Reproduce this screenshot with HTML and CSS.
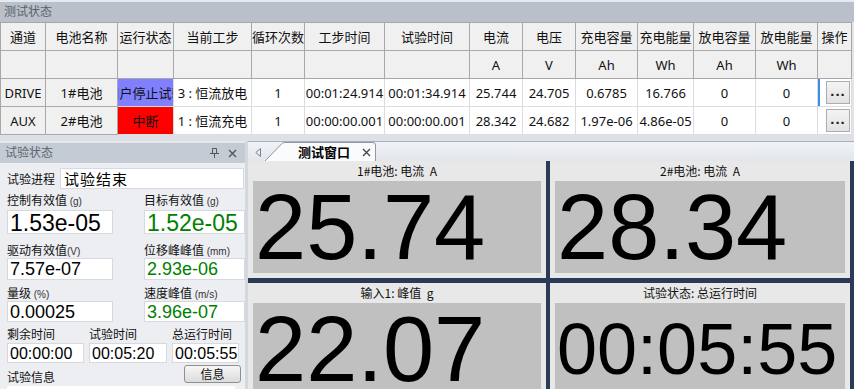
FILE: index.html
```html
<!DOCTYPE html>
<html lang="zh-CN">
<head>
    <meta charset="UTF-8">
    <title>测试状态</title>
    <link rel="stylesheet" href="styles.css">
</head>
<body>
    <div class="app">
        <div class="status-pane">
            <div class="pane-title">测试状态</div>
            <div class="grid-wrap">
                <table class="grid">
                    <colgroup>
                        <col style="width:45px"><col style="width:72px"><col style="width:56px"><col style="width:78px">
                        <col style="width:53px"><col style="width:80px"><col style="width:85px"><col style="width:53px">
                        <col style="width:53px"><col style="width:62px"><col style="width:56px"><col style="width:62px">
                        <col style="width:62px"><col style="width:34px">
                    </colgroup>
                    <thead>
                        <tr>
                            <th>通道</th><th>电池名称</th><th>运行状态</th><th>当前工步</th><th>循环次数</th>
                            <th>工步时间</th><th>试验时间</th><th>电流</th><th>电压</th><th>充电容量</th>
                            <th>充电能量</th><th>放电容量</th><th>放电能量</th><th>操作</th>
                        </tr>
                        <tr>
                            <th></th><th></th><th></th><th></th><th></th><th></th><th></th>
                            <th>A</th><th>V</th><th>Ah</th><th>Wh</th><th>Ah</th><th>Wh</th><th></th>
                        </tr>
                    </thead>
                    <tbody>
                        <tr>
                            <td class="head-cell">DRIVE</td>
                            <td class="head-cell">1#电池</td>
                            <td class="state state-stop"><div class="clip">用户停止试验</div></td>
                            <td><div class="clip">3 : 恒流放电</div></td>
                            <td>1</td>
                            <td><div class="clip">00:01:24.914</div></td>
                            <td><div class="clip">00:01:34.914</div></td>
                            <td>25.744</td><td>24.705</td><td>0.6785</td><td>16.766</td><td>0</td><td>0</td>
                            <td class="op focus"><button class="dots">...</button></td>
                        </tr>
                        <tr>
                            <td class="head-cell">AUX</td>
                            <td class="head-cell">2#电池</td>
                            <td class="state state-break"><div class="clip">中断</div></td>
                            <td><div class="clip">1 : 恒流充电</div></td>
                            <td>1</td>
                            <td><div class="clip">00:00:00.001</div></td>
                            <td><div class="clip">00:00:00.001</div></td>
                            <td>28.342</td><td>24.682</td><td><div class="clip">1.97e-06</div></td><td><div class="clip">4.86e-05</div></td><td>0</td><td>0</td>
                            <td class="op"><button class="dots">...</button></td>
                        </tr>
                    </tbody>
                </table>
            </div>
        </div>

        <div class="lower">
            <div class="dock">
                <div class="dock-title">
                    <span>试验状态</span>
                    <span class="dock-btns">
                        <svg width="9" height="10" viewBox="0 0 9 10">
                            <path d="M2.5 0.5h4v5h-4z M0 5.5h9 M4.5 5.5v4.5" fill="none" stroke="#555" stroke-width="1"/>
                        </svg>
                        <svg width="9" height="9" viewBox="0 0 9 9">
                            <path d="M1 1L8 8M8 1L1 8" stroke="#555" stroke-width="1.4"/>
                        </svg>
                    </span>
                </div>
                <div class="dock-body">
                    <div class="progress-row">
                        <span class="lbl">试验进程</span>
                        <div class="field field-progress">试验结束</div>
                    </div>

                    <div class="pair lbl-row mt4">
                        <span class="lbl">控制有效值 <small>(g)</small></span>
                        <span class="lbl">目标有效值 <small>(g)</small></span>
                    </div>
                    <div class="pair mt2">
                        <div class="field val-big">1.53e-05</div>
                        <div class="field val-big green">1.52e-05</div>
                    </div>

                    <div class="pair lbl-row mt8">
                        <span class="lbl">驱动有效值<small>(V)</small></span>
                        <span class="lbl">位移峰峰值 <small>(mm)</small></span>
                    </div>
                    <div class="pair">
                        <div class="field val h22">7.57e-07</div>
                        <div class="field val h22 green">2.93e-06</div>
                    </div>

                    <div class="pair lbl-row mt5">
                        <span class="lbl">量级 <small>(%)</small></span>
                        <span class="lbl">速度峰值 <small>(m/s)</small></span>
                    </div>
                    <div class="pair">
                        <div class="field val h21">0.00025</div>
                        <div class="field val h21 green">3.96e-07</div>
                    </div>

                    <div class="times lbl-row mt4">
                        <span class="lbl">剩余时间</span>
                        <span class="lbl">试验时间</span>
                        <span class="lbl">总运行时间</span>
                    </div>
                    <div class="times mt1">
                        <div class="field time">00:00:00</div>
                        <div class="field time">00:05:20</div>
                        <div class="field time">00:05:55</div>
                    </div>

                    <div class="info-row">
                        <span class="lbl">试验信息</span>
                        <button class="info-btn">信息</button>
                    </div>
                    <div class="info-box">
                        <div class="info-scroll"></div>
                    </div>
                </div>
            </div>

            <div class="splitter"></div>

            <div class="doc">
                <div class="tabstrip">
                    <svg class="tab-arrow" width="6" height="9" viewBox="0 0 6 9">
                        <path d="M5.5 0.5L0.8 4.5L5.5 8.5Z" fill="none" stroke="#7a8494" stroke-width="1"/>
                    </svg>
                    <div class="tab">
                        <svg class="tab-shape" width="112" height="19" viewBox="0 0 112 19">
                            <path d="M0 19L17 1.5Q18 0.5 20 0.5L108 0.5Q110.5 0.5 110.5 3L110.5 19" fill="#fafbfc" stroke="#8d97a6" stroke-width="1"/>
                        </svg>
                        <span class="tab-text">测试窗口</span>
                        <svg class="tab-close" width="9" height="9" viewBox="0 0 9 9">
                            <path d="M1 1L8 8M8 1L1 8" stroke="#444" stroke-width="1.3"/>
                        </svg>
                    </div>
                </div>
                <div class="tiles">
                    <div class="tile">
                        <div class="tile-title">1#电池: 电流&nbsp; A</div>
                        <div class="tile-value">25.74</div>
                    </div>
                    <div class="tile">
                        <div class="tile-title">2#电池: 电流&nbsp; A</div>
                        <div class="tile-value">28.34</div>
                    </div>
                    <div class="tile">
                        <div class="tile-title">输入1: 峰值&nbsp; g</div>
                        <div class="tile-value">22.07</div>
                    </div>
                    <div class="tile">
                        <div class="tile-title">试验状态: 总运行时间</div>
                        <div class="tile-value tile-time">00:05:55</div>
                    </div>
                </div>
            </div>
        </div>
    </div>
</body>
</html>
```

FILE: styles.css
```css
body {
    margin: 0;
    font-family: "Noto Sans", "Noto Sans CJK SC", sans-serif;
    background-color: #dde1e7;
    overflow: hidden;
}
.app {
    width: 854px;
    height: 389px;
    display: flex;
    flex-direction: column;
    overflow: hidden;
}

/* top grid pane */
.pane-title {
    height: 20px;
    border-top: 2px solid #e6e9ee;
    background-color: #b9c0ca;
    color: #5a606b;
    font-size: 12px;
    line-height: 20px;
    padding-left: 4px;
}
.grid-wrap {
    background-color: #e4e4e4;
    height: 113px;
}
.grid {
    border-collapse: collapse;
    table-layout: fixed;
    width: 851px;
    font-size: 13px;
    color: #111;
}
.grid tr {
    height: 28px;
}
.grid th {
    background-color: #f0f0f0;
    border: 1px solid #a8a8a8;
    font-weight: normal;
    padding: 0;
    white-space: nowrap;
    overflow: hidden;
}
.grid td {
    background-color: #fff;
    border: 1px solid #dcdcdc;
    text-align: center;
    padding: 0;
    white-space: nowrap;
    overflow: hidden;
}
.grid td.head-cell {
    background-color: #f0f0f0;
    border: 1px solid #a8a8a8;
}
.clip {
    display: flex;
    justify-content: center;
    overflow: hidden;
    white-space: nowrap;
}
.grid td.state-stop {
    background-color: #8080ff;
}
.grid td.state-break {
    background-color: #ff0000;
}
.grid td.op {
    text-align: right;
    padding-right: 1px;
}
.grid td.focus {
    box-shadow: inset 2px 0 0 #3a8ee6;
}
.dots {
    width: 24px;
    height: 23px;
    padding: 0 0 6px 0;
    border: 1px solid #adadad;
    background: linear-gradient(#f4f4f4, #e2e2e2);
    font-family: "Liberation Sans", sans-serif;
    font-size: 15px;
    font-weight: bold;
    letter-spacing: 1px;
    color: #222;
    vertical-align: middle;
}

/* lower area */
.lower {
    flex: 1;
    display: flex;
    margin-top: 6px;
    min-height: 0;
}
.dock {
    width: 245px;
    display: flex;
    flex-direction: column;
    background-color: #eceef2;
}
.dock-title {
    height: 20px;
    border-top: 2px solid #e4e7ec;
    background-color: #c5cbd4;
    color: #5f6570;
    font-size: 12px;
    line-height: 20px;
    padding-left: 5px;
    display: flex;
    justify-content: space-between;
    align-items: center;
}
.dock-btns {
    display: flex;
    align-items: center;
    gap: 9px;
    padding-right: 8px;
}
.dock-body {
    flex: 1;
    padding: 5px 0 0 7px;
    font-family: "Noto Sans CJK SC", sans-serif;
    display: flex;
    flex-direction: column;
    overflow: hidden;
}
.lbl {
    font-size: 12px;
    color: #111;
    white-space: nowrap;
}
.lbl small {
    font-family: "Liberation Sans", sans-serif;
    font-size: 10px;
    color: #333;
}
.progress-row {
    display: flex;
    align-items: center;
    height: 20px;
}
.progress-row .lbl {
    width: 53px;
}
.field {
    background-color: #fff;
    border: 1px solid #d6dae0;
    box-sizing: border-box;
    overflow: hidden;
    white-space: nowrap;
    color: #000;
}
.field-progress {
    width: 184px;
    height: 21px;
    font-size: 15px;
    letter-spacing: 1px;
    line-height: 19px;
    padding-left: 3px;
}
.pair {
    display: grid;
    grid-template-columns: 106px 101px;
    column-gap: 31px;
}
.lbl-row {
    height: 16px;
    line-height: 16px;
}
.mt1 { margin-top: 1px; }
.mt2 { margin-top: 2px; }
.mt4 { margin-top: 4px; }
.mt5 { margin-top: 5px; }
.mt8 { margin-top: 8px; }
.val-big {
    height: 24px;
    font-family: "Liberation Sans", sans-serif;
    font-size: 23px;
    line-height: 24px;
    padding-left: 2px;
}
.val {
    font-family: "Liberation Sans", sans-serif;
    font-size: 18px;
    padding-left: 2px;
}
.h22 { height: 22px; line-height: 21px; }
.h21 { height: 21px; line-height: 20px; }
.green {
    color: #008000;
}
.times {
    display: grid;
    grid-template-columns: 77px 78px 67px;
    column-gap: 5px;
}
.time {
    height: 20px;
    font-family: "Liberation Sans", sans-serif;
    font-size: 16px;
    line-height: 19px;
    padding-left: 2px;
}
.info-row {
    margin-top: 2px;
    height: 18px;
    display: flex;
    justify-content: space-between;
    align-items: center;
    padding-right: 4px;
}
.info-row .lbl {
    margin-top: 4px;
}
.info-btn {
    width: 57px;
    height: 18px;
    padding: 0;
    border: 1px solid #8f8f8f;
    border-radius: 3px;
    background: linear-gradient(#f6f6f6, #dcdcdc);
    font-family: "Noto Sans CJK SC", sans-serif;
    font-size: 12px;
    line-height: 16px;
    color: #111;
}
.info-box {
    margin-top: 3px;
    height: 20px;
    width: 238px;
    background-color: #fff;
    display: flex;
    justify-content: flex-end;
}
.info-scroll {
    width: 10px;
    background-color: #f0f0f0;
}
.splitter {
    width: 3px;
    background-color: #d3d7de;
}

/* document area */
.doc {
    flex: 1;
    display: flex;
    flex-direction: column;
    min-width: 0;
}
.tabstrip {
    height: 20px;
    border-top: 1px solid #a9b0bb;
    background: linear-gradient(#f0f2f5, #e2e6ec);
    display: flex;
    align-items: flex-end;
    position: relative;
}
.tab-arrow {
    position: absolute;
    left: 7px;
    top: 6px;
}
.tab {
    position: relative;
    margin-left: 17px;
    width: 112px;
    height: 19px;
}
.tab-shape {
    position: absolute;
    left: 0;
    top: 0;
}
.tab-text {
    position: absolute;
    left: 33px;
    top: 0;
    font-family: "Noto Sans CJK SC", sans-serif;
    font-size: 13px;
    font-weight: bold;
    line-height: 19px;
    color: #000;
}
.tab-close {
    position: absolute;
    left: 97px;
    top: 6px;
}
.tiles {
    flex: 1;
    background-color: #2b3a56;
    padding: 0 4px 3px 0;
    display: grid;
    grid-template-columns: 298px 1fr;
    grid-template-rows: 1fr 1fr;
    gap: 5px 4px;
}
.tile {
    background-color: #e8e8e8;
    padding: 0 5px 5px 5px;
    display: flex;
    flex-direction: column;
    min-height: 0;
}
.tile-title {
    height: 20px;
    line-height: 20px;
    text-align: center;
    font-family: "Noto Sans CJK SC", sans-serif;
    font-size: 12px;
    color: #111;
    overflow: hidden;
}
.tile-value {
    flex: 1;
    background-color: #c0c0c0;
    display: flex;
    align-items: center;
    padding-left: 2px;
    font-family: "Liberation Sans", sans-serif;
    font-size: 92px;
    line-height: 1;
    color: #000;
    overflow: hidden;
}
.tile-time {
    font-size: 72px;
}
```
